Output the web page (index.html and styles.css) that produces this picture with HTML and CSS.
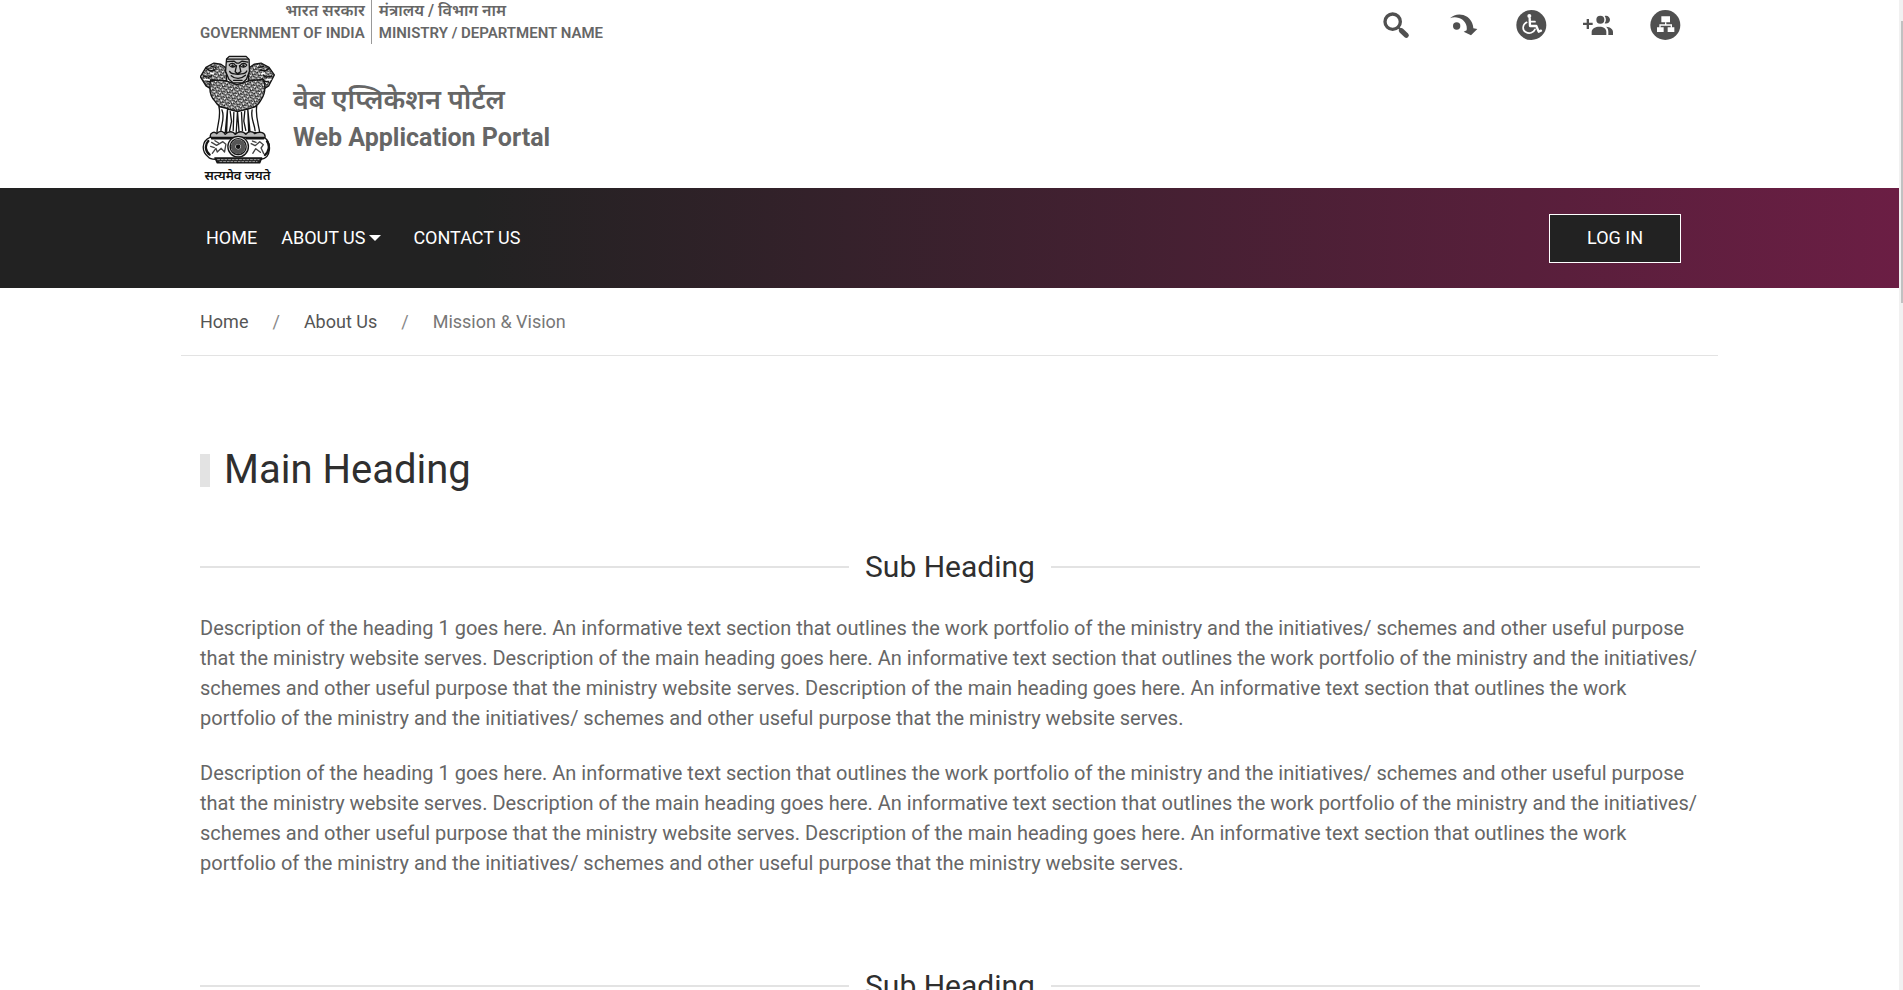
FILE: index.html
```html
<!DOCTYPE html>
<html lang="en">
<head>
<meta charset="utf-8">
<title>Web Application Portal</title>
<link rel="stylesheet" href="styles.css">
</head>
<body>
<div class="shell">
  <div class="page">
    <header class="container header">
      <div class="header-top">
        <div class="identity">
          <div class="identity-part identity-gov"><span class="identity-hi" lang="hi">भारत सरकार</span><span>GOVERNMENT OF INDIA</span></div>
          <div class="identity-part identity-min"><span class="identity-hi" lang="hi">मंत्रालय / विभाग नाम</span><span>MINISTRY / DEPARTMENT NAME</span></div>
        </div>
        <div class="tools">
          <button class="tool" type="button" aria-label="Search">
            <svg viewBox="0 0 93 93"><circle cx="32" cy="35" r="23" fill="none" stroke="#505050" stroke-width="10"/><path d="M48 51l9 9" stroke="#505050" stroke-width="7"/><path d="M58 62l15 14" stroke="#505050" stroke-width="15" stroke-linecap="round" stroke-linejoin="round"/></svg>
          </button>
          <a class="tool" href="#main" aria-label="Skip to main content">
            <svg viewBox="0 0 93 93"><circle cx="23" cy="48" r="11" fill="#505050"/><path d="M3 25C13 14 29 11 43 15C62 21 72 37 73 55L85 57L66 76L44 65L53 61C56 44 46 29 30 24C20 20 11 21 3 25Z" fill="#505050"/></svg>
          </a>
          <button class="tool" type="button" aria-label="Accessibility">
            <svg viewBox="0 0 93 93"><circle cx="46" cy="45" r="45" fill="#505050"/><circle cx="40" cy="18" r="6" fill="#fff"/><g fill="none" stroke="#fff" stroke-linejoin="round" stroke-linecap="round"><path d="M41 25L42 48H61L68 65L75 62" stroke-width="7"/><path d="M42 35H57" stroke-width="5"/><path d="M32 37C19 44 18 60 29 66C40 73 53 68 57 58" stroke-width="5"/></g></svg>
          </button>
          <button class="tool" type="button" aria-label="Social media">
            <svg viewBox="0 0 93 93"><g fill="#505050"><path d="M0 38H11V27H18V38H29V45H18V57H11V45H0Z"/><circle cx="52" cy="29" r="12"/><path d="M26 75V66C26 55 38 50 49 50C61 50 70 55 70 66V75Z"/><path d="M65 18C73 15 81 21 81 29C81 37 73 43 65 40C70 33 70 25 65 18Z"/><path d="M69 50C82 51 90 57 90 66V75H76V66C76 59 74 54 69 50Z"/></g></svg>
          </button>
          <a class="tool" href="#" aria-label="Sitemap">
            <svg viewBox="0 0 93 93"><circle cx="46" cy="45" r="45" fill="#505050"/><path d="M34 19H60V37H34ZM21 52H41V66H21ZM53 52H73V66H53Z" fill="#fff"/><path d="M47 37V45M30 53V45H64V53" fill="none" stroke="#fff" stroke-width="4"/></svg>
          </a>
        </div>
      </div>
      <a class="brand" href="#">
        <span class="emblem">
          <svg class="emblem-art" viewBox="30 15 226 328" aria-hidden="true">
            <defs>
              <pattern id="fur" width="17" height="16" patternUnits="userSpaceOnUse" patternTransform="rotate(8)">
                <rect width="17" height="16" fill="#c8c8c8"/>
                <path d="M0 2C4 10 7 11 8 3M8 10C11 19 15 17 17 9M0 12L5 16M10 1L16 6" fill="none" stroke="#111" stroke-width="3"/>
                <path d="M3 1L5 5M12 9L14 12" stroke="#fff" stroke-width="4"/>
              </pattern>
            </defs>
            <g stroke="#151515" stroke-width="4" stroke-linejoin="round" stroke-linecap="round" fill="#fff">
              <path d="M72 39L92 42L109 54L111 102L78 126L48 108L31 80L48 52Z" fill="url(#fur)"/>
              <path d="M214 39L194 42L177 54L175 102L208 126L237 108L254 75L238 52Z" fill="url(#fur)"/>
              <path d="M62 90C56 120 62 142 76 155C85 170 98 176 112 178L143 186L174 178C194 176 207 163 214 150C228 130 228 110 222 88L180 92L142 104L106 92Z" fill="url(#fur)"/>
              <path d="M87 170C94 200 83 220 81 249H106L113 176ZM113 178L110 251H139L143 185ZM143 185L148 251H177L174 178ZM174 178L181 249H210C207 225 196 198 201 169Z"/>
              <path d="M96 180C106 205 94 225 93 242M121 185L125 215L119 244M132 188L130 242M155 188L158 243M165 184L162 214L168 242M187 180C182 207 194 220 196 243" fill="none"/>
              <path d="M110 27L118 19H169L178 28L179 64L170 88L158 99H130L117 88L107 64Z" fill="#c4c4c4"/>
              <path d="M112 27H176M113 35L132 33L140 39L148 39L157 33L174 36" fill="none"/>
              <path d="M118 45C123 37 134 39 137 47C131 53 122 52 118 45ZM151 47C155 39 166 38 171 45C167 53 156 53 151 47Z"/>
              <circle cx="128" cy="47" r="2" fill="#111"/><circle cx="161" cy="47" r="2" fill="#111"/>
              <path d="M140 47L136 65L144 71L153 65L149 47M119 64C124 76 134 69 144 73C154 69 165 76 171 63M124 77C136 88 154 88 167 76M131 91H157" fill="none" stroke-width="4"/>
              <path d="M48 55L62 63L75 60M40 78L57 82L66 75M50 96L68 93M238 55L225 63L211 60M246 78L229 82L221 75M236 96L220 93M64 49L78 52M222 49L208 52" fill="none"/>
              <path d="M62 69L70 72M224 69L216 72M43 88L58 90M243 88L229 90" stroke="#fff" stroke-width="5"/>
              <path d="M61 260C60 248 74 244 80 252C91 239 102 246 106 254C116 243 130 244 136 254C148 243 160 244 168 254C176 242 189 244 195 252C211 243 228 249 226 263L220 268H66Z" fill="#bbb"/>
              <path d="M60 263C35 274 33 306 55 322C59 328 68 329 76 329H214C245 325 247 278 223 263Z"/>
              <path d="M55 274C43 287 47 306 59 315M232 275C242 289 237 307 226 316" fill="none" stroke-width="7"/>
              <path d="M65 278L80 287L99 276L108 284L104 307L94 296L82 307L78 296L67 311M75 273L86 280M62 290L73 294" fill="none" stroke="#444"/>
              <path d="M184 282L196 288L210 276L221 285L214 295L222 312M189 311L198 297L212 308M188 274L199 278" fill="none" stroke="#444"/>
              <circle cx="145" cy="291" r="31" fill="#ddd"/><circle cx="145" cy="291" r="24"/>
              <circle cx="145" cy="291" r="15" fill="none" stroke-width="14" stroke-dasharray="2 4" stroke="#555"/>
              <circle cx="145" cy="291" r="5" fill="#111"/>
              <path d="M75 325H216L210 340H82Z" fill="#222"/>
              <path d="M83 330H208M90 336H202" stroke="#ddd" stroke-width="2" stroke-dasharray="6 5"/>
              <path d="M65 267H124M169 267H222" stroke-width="5"/>
            </g>
          </svg>
          <span class="motto" lang="hi">सत्यमेव जयते</span>
        </span>
        <span class="brand-name"><span class="brand-hi" lang="hi">वेब एप्लिकेशन पोर्टल</span><span class="brand-en">Web Application Portal</span></span>
      </a>
    </header>

    <nav class="nav" aria-label="Main">
      <div class="container nav-inner">
        <div class="nav-links">
          <a href="#">HOME</a>
          <a href="#" class="nav-drop">ABOUT US<span class="caret"></span></a>
          <a href="#">CONTACT US</a>
        </div>
        <button class="login" type="button">LOG IN</button>
      </div>
    </nav>

    <nav class="container crumbs" aria-label="Breadcrumb">
      <a href="#">Home</a><span class="slash">/</span><a href="#">About Us</a><span class="slash">/</span><span class="current">Mission &amp; Vision</span>
    </nav>

    <main class="container main" id="main">
      <h1 class="title">Main Heading</h1>
      <section class="section">
        <h2 class="subtitle">Sub Heading</h2>
        <p>Description of the heading 1 goes here. An informative text section that outlines the work portfolio of the ministry and the initiatives/ schemes and other useful purpose that the ministry website serves. Description of the main heading goes here. An informative text section that outlines the work portfolio of the ministry and the initiatives/ schemes and other useful purpose that the ministry website serves. Description of the main heading goes here. An informative text section that outlines the work portfolio of the ministry and the initiatives/ schemes and other useful purpose that the ministry website serves.</p>
        <p>Description of the heading 1 goes here. An informative text section that outlines the work portfolio of the ministry and the initiatives/ schemes and other useful purpose that the ministry website serves. Description of the main heading goes here. An informative text section that outlines the work portfolio of the ministry and the initiatives/ schemes and other useful purpose that the ministry website serves. Description of the main heading goes here. An informative text section that outlines the work portfolio of the ministry and the initiatives/ schemes and other useful purpose that the ministry website serves.</p>
      </section>
      <section class="section">
        <h2 class="subtitle">Sub Heading</h2>
      </section>
    </main>
  </div>
  <div class="scrollbar" aria-hidden="true"><div class="scroll-thumb"></div></div>
</div>
</body>
</html>
```

FILE: styles.css
```css
* { box-sizing: border-box; }

body {
  margin: 0;
  background: #fff;
  color: #666;
  font-family: Roboto, "Noto Sans Devanagari", "Noto Sans", sans-serif;
  font-size: 20px;
  line-height: 30px;
}

a { color: inherit; text-decoration: none; }
button { font: inherit; cursor: pointer; }

.shell { display: flex; height: 100vh; overflow: hidden; }
.page { flex: 1; min-width: 0; }
.container { max-width: 1537px; margin: 0 auto; padding: 0 18px 0 19px; }

.header-top { display: flex; justify-content: space-between; align-items: flex-start; }
.identity { display: flex; font-size: 15px; font-weight: 600; line-height: 22px; }
.identity-part { display: flex; flex-direction: column; height: 44px; }
.identity-gov { text-align: right; padding-right: 6px; border-right: 1px solid #999; }
.identity-min { padding-left: 7px; }
.identity-hi { font-size: 16px; }

.tools { display: flex; gap: 36px; padding: 10px 19px 0 0; }
.tool { width: 31px; height: 31px; padding: 0; border: 0; background: none; }
.tool svg { display: block; width: 100%; height: 100%; }

.brand { display: flex; width: fit-content; gap: 18px; padding-top: 11px; }
.emblem { display: flex; flex-direction: column; align-items: center; width: 75px; }
.emblem-art { display: block; width: 75px; height: 109px; }
.motto { color: #111; font-size: 13px; font-weight: 600; line-height: 24px; white-space: nowrap; }
.brand-name { display: flex; flex-direction: column; padding-top: 25px; font-weight: 700; }
.brand-hi { font-size: 27px; font-weight: 600; line-height: 40px; }
.brand-en { font-size: 25px; line-height: 36px; }

.nav { background: linear-gradient(90deg, #222 25%, #6b1e44 100%); color: #fff; font-size: 18px; }
.nav-inner { display: flex; align-items: center; justify-content: space-between; height: 100px; }
.nav-links { display: flex; gap: 24px; padding-left: 6px; }
.nav-drop { display: flex; align-items: center; padding-right: 8px; }
.caret { margin-left: 4px; border: 6px solid transparent; border-top-color: #fff; border-bottom: 0; }
.login { width: 132px; height: 49px; margin-right: 19px; border: 1px solid #fff; background: #222; color: #fff; }

.crumbs { display: flex; align-items: center; height: 68px; border-bottom: 1px solid #e3e3e3; color: #555; font-size: 18px; }
.slash { margin: 0 24px; color: #888; }
.current { color: #777; }

.title { display: flex; align-items: center; gap: 14px; margin: 90px 0 55px; color: #2f2f2f; font-size: 40px; font-weight: 400; line-height: 48px; }
.title::before { content: ""; width: 10px; height: 33px; background: #e3e3e3; }
.section { margin-bottom: 90px; }
.section p { margin: 0 0 25px; }
.section p:last-child { margin-bottom: 0; }
.subtitle { display: flex; align-items: center; gap: 16px; margin: 0 0 28px; color: #2f2f2f; font-size: 30px; font-weight: 400; line-height: 36px; }
.subtitle::before, .subtitle::after { content: ""; flex: 1; height: 2px; background: #e3e3e3; }

.scrollbar { width: 4px; padding: 21px 0 0 2px; background: #f1f1f1; }
.scroll-thumb { height: 282px; background: #c1c1c1; }
```
